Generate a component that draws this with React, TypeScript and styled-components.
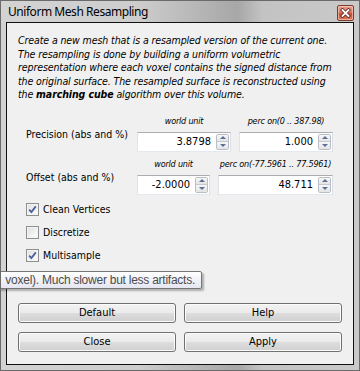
import React from "react";
import styled, { createGlobalStyle } from "styled-components";

const Global = createGlobalStyle`
  html, body { margin: 0; padding: 0; width: 360px; height: 371px; overflow: hidden; background: #ffffff; }
  #root { width: 360px; height: 371px; }
`;

const UI = `"DejaVu Sans Condensed", "Liberation Sans", sans-serif`;

const Window = styled.div`
  position: relative;
  box-sizing: border-box;
  width: 360px;
  height: 371px;
  border: 1px solid #6a6a6a;
  background: linear-gradient(to right, #d3d3d3 0%, #cdcdcd 38%, #b2b2b2 58%, #a7a7a7 66%, #c3c3c3 73%, #c9c9c9 100%);
  padding: 0 5px 5px 5px;
  display: flex;
  flex-direction: column;
  overflow: hidden;
`;

const TitleBar = styled.div`
  height: 21px;
  display: flex;
  align-items: flex-start;
  justify-content: space-between;
  padding-left: 2px;
`;

const TitleText = styled.div`
  font-family: "Noto Sans", "Liberation Sans", sans-serif;
  font-size: 12px;
  line-height: 21px;
  color: #000;
  letter-spacing: -0.45px;
`;

const CloseBtn = styled.div`
  margin-top: 4px;
  box-sizing: border-box;
  width: 17px;
  height: 16px;
  border: 1px solid #7d3a2e;
  border-radius: 2px;
  background: linear-gradient(#e8a08d 0%, #da785f 45%, #c94b30 55%, #dc7b5f 100%);
  box-shadow: inset 0 0 0 1px rgba(255, 220, 210, 0.55);
  display: flex;
  align-items: center;
  justify-content: center;
`;

const Client = styled.div`
  flex: 1;
  box-sizing: border-box;
  border: 1px solid #111;
  background: #f0f0f0;
  padding: 11px 11px 12px 11px;
  display: flex;
  flex-direction: column;
  font-family: ${UI};
  font-size: 10.5px;
  color: #000;
`;

const Description = styled.div`
  font-style: italic;
  line-height: 13.5px;
  white-space: nowrap;
  letter-spacing: -0.1px;
`;

const ParamGrid = styled.div<{ $c2: number; $c3: number; $top: number }>`
  display: grid;
  grid-template-columns: 103px ${(p) => p.$c2}px ${(p) => p.$c3}px;
  grid-template-rows: 14px 20px;
  column-gap: 8px;
  row-gap: 4px;
  margin: ${(p) => p.$top}px 0 0 8px;
`;

const ParamLabel = styled.div`
  grid-row: 1 / span 2;
  grid-column: 1;
  align-self: center;
  padding-top: 2px;
  white-space: nowrap;
`;

const ColHeader = styled.div`
  font-style: italic;
  font-size: 9px;
  line-height: 14px;
  text-align: center;
  white-space: nowrap;
  color: #000;
  letter-spacing: -0.2px;
`;

const SpinBox = styled.div`
  box-sizing: border-box;
  height: 20px;
  border: 1px solid;
  border-color: #abadb3 #dbdfe6 #e3e9ef #e2e3ea;
  background: #fff;
  display: flex;
  align-items: center;
  justify-content: flex-end;
  padding-right: 1px;
  font-size: 11px;
`;

const SpinValue = styled.span`
  margin-right: 5px;
`;

const SpinButtons = styled.div`
  box-sizing: border-box;
  width: 13px;
  height: 16px;
  border: 1px solid #b9bdc6;
  border-radius: 2px;
  display: flex;
  flex-direction: column;
  overflow: hidden;
`;

const SpinHalf = styled.div<{ $down?: boolean }>`
  flex: 1;
  display: flex;
  align-items: center;
  justify-content: center;
  background: linear-gradient(#f7f7f7, #e4e4e4);
  border-top: ${(p) => (p.$down ? "1px solid #c4c8d0" : "none")};
`;

const Arrow = styled.div<{ $down?: boolean }>`
  width: 0;
  height: 0;
  border-left: 3px solid transparent;
  border-right: 3px solid transparent;
  ${(p) => (p.$down ? "border-top: 3px solid #5b6f98;" : "border-bottom: 3px solid #5b6f98;")}
`;

const CheckList = styled.div`
  margin: 3px 0 0 8px;
  display: flex;
  flex-direction: column;
`;

const CheckRow = styled.label`
  height: 23px;
  display: flex;
  align-items: center;
  gap: 4px;
`;

const CheckBox = styled.span`
  box-sizing: border-box;
  width: 13px;
  height: 13px;
  border: 1px solid #8e8f8f;
  background: linear-gradient(135deg, #dcdedf 0%, #f2f2f2 60%, #fbfbfb 100%);
  box-shadow: inset 0 0 0 1px #f4f4f4;
  display: flex;
  align-items: center;
  justify-content: center;
`;

const ButtonGrid = styled.div`
  margin-top: auto;
  display: grid;
  grid-template-columns: 1fr 1fr;
  grid-auto-rows: 20px;
  column-gap: 8px;
  row-gap: 9px;
`;

const PushButton = styled.button`
  box-sizing: border-box;
  margin: 0;
  padding: 0;
  border: 1px solid #707070;
  border-radius: 3px;
  background: linear-gradient(#f2f2f2 0%, #ebebeb 48%, #dddddd 52%, #cfcfcf 100%);
  box-shadow: inset 0 0 0 1px #fbfbfb;
  font-family: ${UI};
  font-size: 11px;
  color: #000;
  line-height: 18px;
`;

const Tooltip = styled.div`
  position: absolute;
  top: 270px;
  right: 157px;
  box-sizing: border-box;
  height: 18px;
  padding: 0 6px 0 12px;
  border: 1px solid #767676;
  border-radius: 2px;
  background: linear-gradient(#ffffff, #e4e5f0);
  box-shadow: 2px 2px 2px rgba(0, 0, 0, 0.28);
  font-family: "Liberation Sans", sans-serif;
  font-size: 12px;
  letter-spacing: -0.25px;
  line-height: 16px;
  color: #4c4c4c;
  white-space: nowrap;
`;

const Spin = ({ value }: { value: string }) => (
  <SpinBox>
    <SpinValue>{value}</SpinValue>
    <SpinButtons>
      <SpinHalf>
        <Arrow />
      </SpinHalf>
      <SpinHalf $down>
        <Arrow $down />
      </SpinHalf>
    </SpinButtons>
  </SpinBox>
);

const Check = ({ checked, label }: { checked: boolean; label: string }) => (
  <CheckRow>
    <CheckBox>
      {checked && (
        <svg width="9" height="9" viewBox="0 0 9 9">
          <path d="M1.2 4.6 L3.4 7 L7.8 1.4" fill="none" stroke="#4a5f9c" strokeWidth="1.8" />
        </svg>
      )}
    </CheckBox>
    <span>{label}</span>
  </CheckRow>
);

export default function App() {
  return (
    <>
      <Global />
      <Window>
        <TitleBar>
          <TitleText>Uniform Mesh Resampling</TitleText>
          <CloseBtn>
            <svg width="11" height="10" viewBox="0 0 11 10">
              <path d="M2.5 2 L8.5 8 M8.5 2 L2.5 8" stroke="#5a2a22" strokeWidth="3.4" strokeLinecap="square" />
              <path d="M2.5 2 L8.5 8 M8.5 2 L2.5 8" stroke="#ffffff" strokeWidth="1.8" strokeLinecap="square" />
            </svg>
          </CloseBtn>
        </TitleBar>
        <Client>
          <Description>
            Create a new mesh that is a resampled version of the current one.
            <br />
            The resampling is done by building a uniform volumetric
            <br />
            representation where each voxel contains the signed distance from
            <br />
            the original surface. The resampled surface is reconstructed using
            <br />
            the <b>marching cube</b> algorithm over this volume.
          </Description>

          <ParamGrid $c2={94} $c3={94} $top={12}>
            <ParamLabel>Precision (abs and %)</ParamLabel>
            <ColHeader>world unit</ColHeader>
            <ColHeader>perc on(0 .. 387.98)</ColHeader>
            <Spin value="3.8798" />
            <Spin value="1.000" />
          </ParamGrid>

          <ParamGrid $c2={73} $c3={115} $top={5}>
            <ParamLabel>Offset (abs and %)</ParamLabel>
            <ColHeader>world unit</ColHeader>
            <ColHeader>perc on(-77.5961 .. 77.5961)</ColHeader>
            <Spin value="-2.0000" />
            <Spin value="48.711" />
          </ParamGrid>

          <CheckList>
            <Check checked label="Clean Vertices" />
            <Check checked={false} label="Discretize" />
            <Check checked label="Multisample" />
          </CheckList>

          <ButtonGrid>
            <PushButton>Default</PushButton>
            <PushButton>Help</PushButton>
            <PushButton>Close</PushButton>
            <PushButton>Apply</PushButton>
          </ButtonGrid>
        </Client>
        <Tooltip>voxel). Much slower but less artifacts.</Tooltip>
      </Window>
    </>
  );
}
